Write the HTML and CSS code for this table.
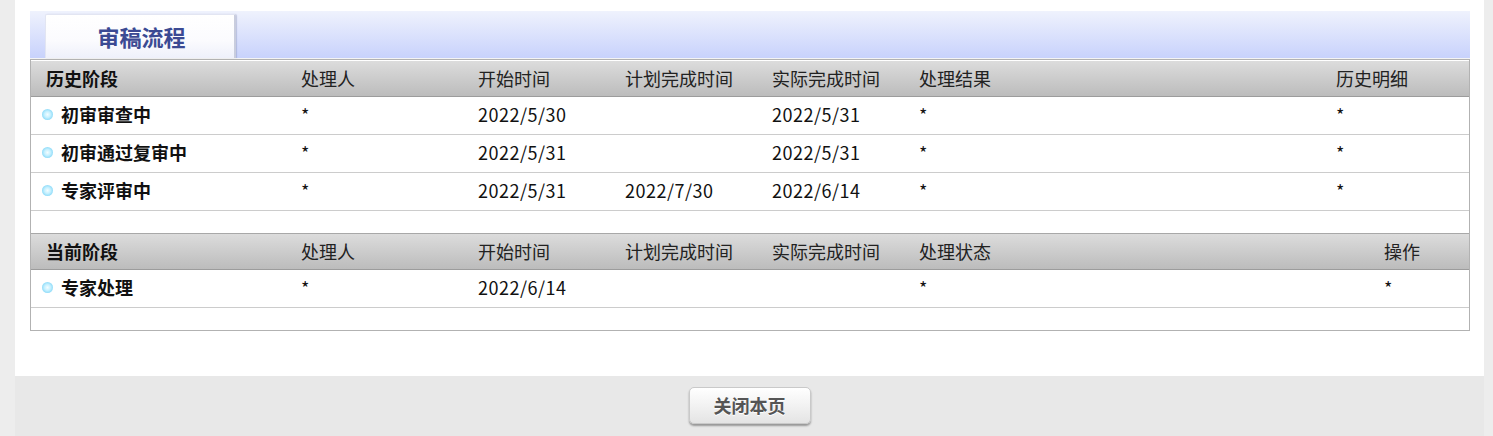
FILE: index.html
```html
<!DOCTYPE html>
<html lang="zh">
<head>
<meta charset="utf-8">
<title>审稿流程</title>
<link rel="stylesheet" href="styles.css">
</head>
<body>
<div class="page">
  <div class="content">
    <div class="band">
      <div class="tab">审稿流程</div>
    </div>
    <div class="box">
      <div class="row head hist">
        <div class="c first">历史阶段</div>
        <div class="c">处理人</div>
        <div class="c">开始时间</div>
        <div class="c">计划完成时间</div>
        <div class="c">实际完成时间</div>
        <div class="c">处理结果</div>
        <div class="c">历史明细</div>
      </div>
      <div class="row data hist">
        <div class="c first stage"><span class="dot"></span>初审审查中</div>
        <div class="c">*</div>
        <div class="c num">2022/5/30</div>
        <div class="c"></div>
        <div class="c num">2022/5/31</div>
        <div class="c">*</div>
        <div class="c">*</div>
      </div>
      <div class="row data hist">
        <div class="c first stage"><span class="dot"></span>初审通过复审中</div>
        <div class="c">*</div>
        <div class="c num">2022/5/31</div>
        <div class="c"></div>
        <div class="c num">2022/5/31</div>
        <div class="c">*</div>
        <div class="c">*</div>
      </div>
      <div class="row data hist">
        <div class="c first stage"><span class="dot"></span>专家评审中</div>
        <div class="c">*</div>
        <div class="c num">2022/5/31</div>
        <div class="c num">2022/7/30</div>
        <div class="c num">2022/6/14</div>
        <div class="c">*</div>
        <div class="c">*</div>
      </div>
      <div class="row empty"></div>
      <div class="row head cur">
        <div class="c first">当前阶段</div>
        <div class="c">处理人</div>
        <div class="c">开始时间</div>
        <div class="c">计划完成时间</div>
        <div class="c">实际完成时间</div>
        <div class="c">处理状态</div>
        <div class="c">操作</div>
      </div>
      <div class="row data cur">
        <div class="c first stage"><span class="dot"></span>专家处理</div>
        <div class="c">*</div>
        <div class="c num">2022/6/14</div>
        <div class="c"></div>
        <div class="c"></div>
        <div class="c">*</div>
        <div class="c">*</div>
      </div>
      <div class="row empty"></div>
    </div>
  </div>
  <div class="footer">
    <button class="btn" type="button">关闭本页</button>
  </div>
</div>
</body>
</html>
```

FILE: styles.css
```css
html, body {
  margin: 0;
  padding: 0;
}
body {
  background: #ededed;
  font-family: "Noto Sans CJK SC", "Noto Sans", sans-serif;
  color: #111;
  height: 436px;
  overflow: hidden;
}
.page {
  margin: 0 9px 0 15px;
  background: #fff;
}
.content {
  padding: 11px 14px 45px 15px;
}
.band {
  height: 47px;
  background: linear-gradient(#eff2fd, #c8d2fc);
  display: flex;
  align-items: flex-end;
  padding-left: 15px;
  border-bottom: 1px solid #f4f4f4;
}
.tab {
  width: 191px;
  height: 44px;
  box-sizing: border-box;
  background: linear-gradient(#ffffff, #fbfbfe 60%, #eef0fb);
  border: 1px solid #e2e5f2;
  border-right: 2px solid #c9cdde;
  border-bottom: none;
  border-radius: 2px 2px 0 0;
  box-shadow: 1px 0 1px rgba(120,130,170,.35);
  color: #3b4a93;
  font-size: 22px;
  font-weight: bold;
  display: flex;
  align-items: center;
  justify-content: center;
  padding-left: 3px;
  padding-bottom: 2px;
}
.box {
  border: 1px solid #b2b2b2;
  padding: 1px 0 0 0;
}
.row {
  display: grid;
  align-items: center;
  font-size: 18px;
}
.row.hist {
  grid-template-columns: 255px 177px 147px 147px 147px 417px 1fr;
}
.row.cur {
  grid-template-columns: 255px 177px 147px 147px 147px 465px 1fr;
}
.c {
  padding-left: 15px;
  white-space: nowrap;
  color: #222;
}
.head {
  height: 35px;
  background: linear-gradient(#dcdcdc, #bcbcbc);
  border-bottom: 1px solid #9c9c9c;
}
.head .c {
  padding-bottom: 2px;
}
.head .first {
  font-weight: bold;
  color: #111;
}
.head.cur {
  border-top: 1px solid #a8a8a8;
}
.data {
  height: 37px;
  border-bottom: 1px solid #cccccc;
}
.data .c {
  color: #111;
  padding-bottom: 4px;
}
.num {
  letter-spacing: 0.5px;
}
.stage {
  font-weight: bold;
  padding-left: 11px !important;
  display: flex;
  align-items: center;
}
.dot {
  display: inline-block;
  width: 11px;
  height: 11px;
  border-radius: 50%;
  background: radial-gradient(circle at 50% 50%, #f4fdff 0%, #c4f0ff 40%, #5ec8f2 100%);
  margin-right: 8px;
  margin-top: 1px;
}
.empty {
  height: 22px;
}
.footer {
  background: #e8e8e8;
  height: 60px;
  display: flex;
  justify-content: center;
  align-items: flex-start;
  padding-top: 11px;
  box-sizing: border-box;
}
.btn {
  width: 122px;
  height: 37px;
  border: 1px solid #c9c9c9;
  border-radius: 5px;
  background: linear-gradient(#ffffff, #f2f2f2 50%, #e4e4e4);
  box-shadow: 0 2px 2px rgba(0,0,0,.35);
  font-family: "Noto Sans CJK SC", sans-serif;
  font-size: 18px;
  font-weight: bold;
  color: #555;
  text-shadow: 0 1px 0 #fff;
  padding: 0 0 2px 0;
}
```
